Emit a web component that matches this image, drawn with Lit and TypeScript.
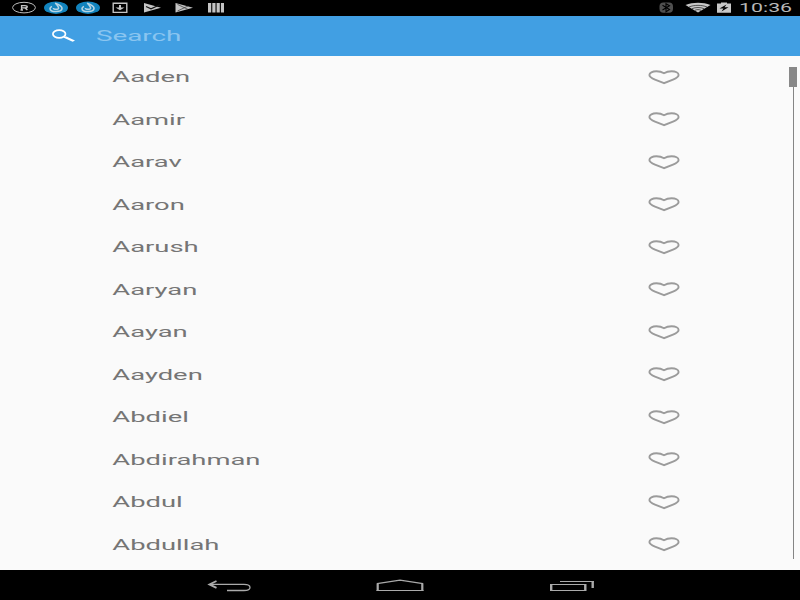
import { LitElement, html, css, svg } from "lit";
import { customElement } from "lit/decorators.js";

const names = ["Aaden", "Aamir", "Aarav", "Aaron", "Aarush", "Aaryan", "Aayan", "Aayden", "Abdiel", "Abdirahman", "Abdul", "Abdullah"];

const drop = (x: number) => svg`
  <ellipse cx=${x} cy="7.7" rx="12" ry="6.2" fill="#1283bd"/>
  <path d="M${x - 1} 3.2C${x + 3} 4.6 ${x + 6} 6 ${x + 6} 8.2C${x + 6} 10.4 ${x + 3} 11.5 ${x} 11.5S${x - 6} 10.4 ${x - 6} 8.4C${x - 6} 7.5 ${x - 5} 6.8 ${x - 4} 6.4" fill="none" stroke="#b5d3e3" stroke-width="1.6"/>
  <path d="M${x} 3.4C${x + 1} 5.4 ${x + 2.6} 6.6 ${x + 2.6} 8C${x + 2.6} 9.8 ${x - 2.6} 9.8 ${x - 2.6} 8" fill="none" stroke="#b5d3e3" stroke-width="1.5"/>`;

@customElement("app-root")
export class AppRoot extends LitElement {
  static styles = css`
    :host { display: flex; flex-direction: column; width: 800px; height: 600px; overflow: hidden; background: #fafafa; font-family: Roboto, sans-serif; }
    svg { display: block; flex: none; }
    .status { height: 16px; background: #000; display: flex; justify-content: space-between; flex: none; }
    .right { display: flex; width: 160px; }
    .clock { color: #b8b8b8; font-size: 13px; line-height: 16px; transform: scaleX(1.64); transform-origin: 0 50%; white-space: nowrap; }
    .search { height: 40px; background: #419fe3; display: flex; align-items: center; flex: none; padding-left: 50px; }
    .hint { margin-left: 20px; color: #8ac5f0; font-size: 14px; line-height: 40px; transform: scaleX(1.985); transform-origin: 0 50%; }
    .main { flex: 1; display: flex; justify-content: space-between; min-height: 0; }
    .list { width: 680px; }
    .row { height: 42.5px; padding-left: 112px; display: flex; align-items: center; justify-content: space-between; box-sizing: border-box; }
    .name { color: #757575; font-size: 14px; line-height: 20px; transform: translate(0.3px, 0.3px) scaleX(1.957); transform-origin: 0 50%; white-space: nowrap; }
    .track { width: 11px; padding-top: 11px; }
    .thumb { width: 8px; height: 20px; background: #888; }
    .line { width: 1px; height: 472px; margin-left: 4px; background: #858585; }
    .nav { height: 30px; background: #000; flex: none; }
  `;

  render() {
    return html`
      <div class="status">
        <svg width="240" height="16" viewBox="0 0 240 16">
          <ellipse cx="24" cy="7.6" rx="11.4" ry="5.3" fill="none" stroke="#bdbdbd" stroke-width="1"/>
          <path d="M21.6 10V5.6H25C28 5.6 28 7.9 25 7.9H21.6M25 7.9L27.4 10M20.5 10H23" fill="none" stroke="#c4c4c4" stroke-width="1.4"/>
          ${drop(56)}${drop(88)}
          <path d="M113.2 3.2H126.8V12.4H113.2Z" fill="none" stroke="#c4c4c4" stroke-width="1.4"/>
          <path d="M119 4.9H121V7.4H124.5L120 10.3L115.5 7.4H119Z" fill="#c4c4c4"/>
          <path d="M144 3L161 7.7L144 12.5Z" fill="#c4c4c4"/>
          <path d="M146 6.6L151 8.8L160 4.8" fill="none" stroke="#111" stroke-width="1.1"/>
          <path d="M175.5 3L193 7.7L175.5 12.5Z" fill="#c4c4c4"/>
          <path d="M177.5 4.4L188 9.4M177.5 11L188 6" fill="none" stroke="#333" stroke-width=".7"/>
          <path d="M208 3H211.2V12.5H208ZM212.3 3H215.5V12.5H212.3ZM216.6 3H219.8V12.5H216.6ZM220.9 3H224V12.5H220.9Z" fill="#c4c4c4"/>
        </svg>
        <div class="right">
          <svg width="99" height="16" viewBox="0 0 99 16">
            <rect x="19.5" y="2.5" width="13.5" height="10.3" rx="4" fill="#505050"/>
            <path d="M22.5 5.3L29.5 9.5L26 11.7V3.7L29.5 5.8L22.5 10" fill="none" stroke="#000" stroke-width="1.1"/>
            <path d="M45.5 5.1C53 2 63 2 70.5 5.1L58 12.4Z" fill="#c8c8c8"/>
            <path d="M49 7C54 4.8 62 4.8 67 7M52 8.7C55.5 7.1 60.5 7.1 64 8.7M55 10.3C57 9.4 59 9.4 61 10.3" fill="none" stroke="#000" stroke-width=".6"/>
            <path d="M77 3.5H81V2.5H87V3.5H91V12.8H77Z" fill="#c8c8c8"/>
            <path d="M86.5 4.4L79.5 8.4H83.5L81.5 11.4L88.5 7.3H84.5Z" fill="#000"/>
          </svg>
          <div class="clock">10:36</div>
        </div>
      </div>
      <div class="search">
        <svg width="26" height="14" viewBox="0 0 26 14">
          <ellipse cx="9.2" cy="5" rx="6.3" ry="3.9" fill="none" stroke="#fff" stroke-width="1.7"/>
          <path d="M13.6 7.6L16.4 7.4L25 11.5L22.6 12.7L13.8 8.8Z" fill="#fff"/>
        </svg>
        <div class="hint">Search</div>
      </div>
      <div class="main">
        <div class="list">
          ${names.map((n) => html`<div class="row"><div class="name">${n}</div>
            <svg width="32" height="15" viewBox="0 0 32 15">
              <path d="M16 13.2L7 9.6C3.2 8 1.4 6.6 1.4 5C1.4 2.9 4.4 1.3 8.4 1.3C11.6 1.3 14 2 16 3.2C18 2 20.4 1.3 23.6 1.3C27.6 1.3 30.6 2.9 30.6 5C30.6 6.6 28.8 8 25 9.6Z" fill="none" stroke="#9b9b9b" stroke-width="1.9"/>
            </svg></div>`)}
        </div>
        <div class="track"><div class="thumb"></div><div class="line"></div></div>
      </div>
      <div class="nav">
        <svg width="800" height="30" viewBox="0 0 800 30" fill="none" stroke="#aaa">
          <path d="M210 14.4H244C248 14.4 250 16 250 17.5S248 20.5 244 20.5H227" stroke-width="1.3"/>
          <path d="M216.5 11L209.5 14.4L216.5 17.8" stroke-width="1.9"/>
          <path d="M376.5 20.5H423.5M377 13.7L400 10.2L423 13.7" stroke-width="1.2"/>
          <path d="M377.7 13.3V21M422.3 13.3V21" stroke-width="2.2"/>
          <path d="M550 14.5H586M550 20.5H586M560 11.5H594" stroke-width="1"/>
          <path d="M551.2 14V21M585.3 14V21M592.7 11V18" stroke-width="2.4"/>
        </svg>
      </div>`;
  }
}
